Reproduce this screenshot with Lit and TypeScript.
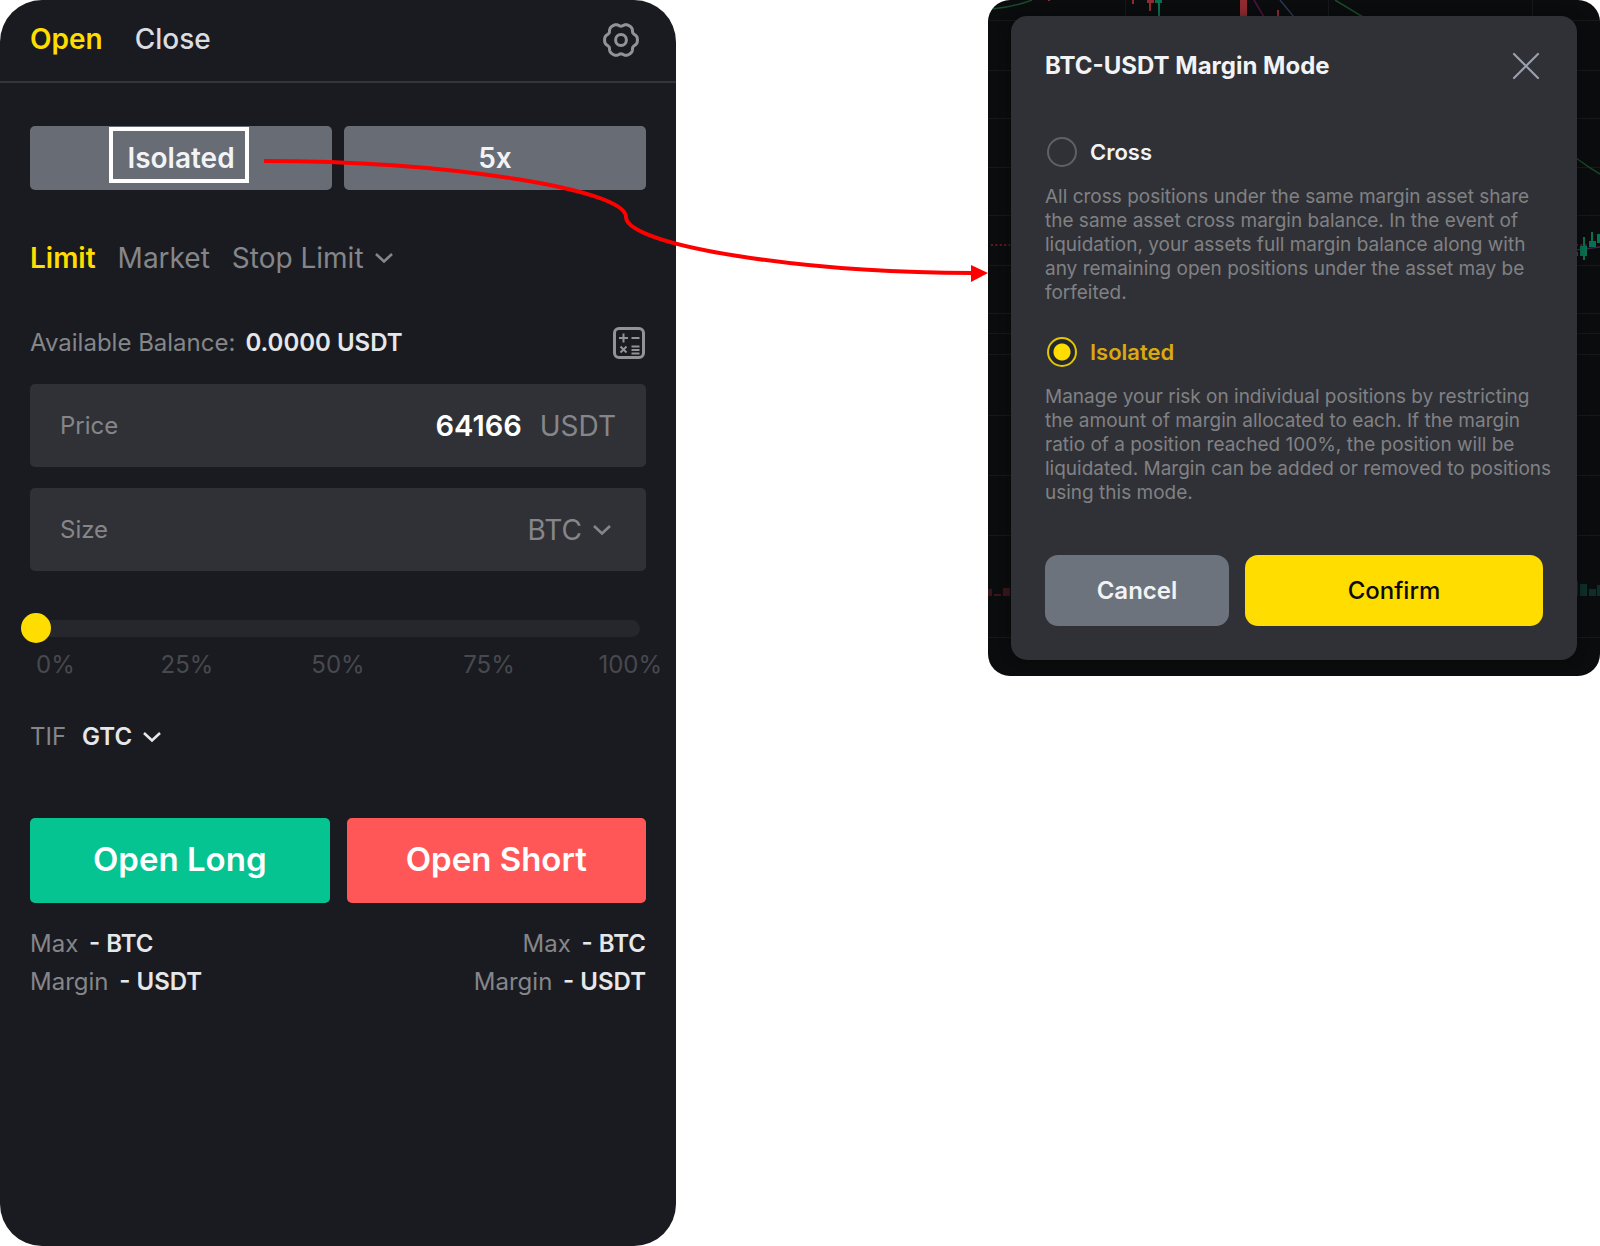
import { LitElement, html, css, svg } from "lit";
import { customElement, state } from "lit/decorators.js";

const caret = html`<svg class="caret" viewBox="0 0 20 12" aria-hidden="true">
  <path d="M2 2 L10 9.5 L18 2" fill="none" stroke="currentColor" stroke-width="2.6" />
</svg>`;

const shared = css`
  :host {
    display: block;
    font-family: Inter, "Liberation Sans", sans-serif;
  }
  * {
    box-sizing: border-box;
  }
  button,
  input,
  select {
    margin: 0;
    padding: 0;
    border: 0;
    background: none;
    color: inherit;
    font: inherit;
  }
  button,
  select {
    cursor: pointer;
  }
`;

@customElement("order-panel")
export class OrderPanel extends LitElement {
  static styles = [
    shared,
    css`
      .panel {
        min-height: 100vh;
        border-radius: 42px;
        background: #1a1b20;
        color: #85868a;
        font-size: 24px;
        line-height: 30px;
      }
      .head {
        display: flex;
        align-items: center;
        gap: 32px;
        height: 83px;
        padding: 0 36px 3px 30px;
        border-bottom: 2px solid #34353a;
        color: #dcdde0;
        font-size: 28px;
        font-weight: 500;
      }
      .head .icon-button {
        margin-left: auto;
      }
      .on {
        color: #ffdd00;
        font-weight: 600;
      }
      .icon-button {
        display: flex;
        color: #929396;
      }
      .gear {
        width: 38px;
        height: 40px;
      }
      .calc {
        width: 34px;
        height: 34px;
      }
      .body {
        padding: 43px 30px 30px;
      }
      .pair {
        display: grid;
        grid-template-columns: 1fr 1fr;
        gap: 12px;
      }
      .mode {
        height: 64px;
        border-radius: 5px;
        background: #676c75;
        color: #f2f3f5;
        font-size: 28px;
        font-weight: 600;
      }
      .marked {
        position: relative;
      }
      .marked::after {
        content: "";
        position: absolute;
        inset: -14px -14px -8px -18px;
        border: 4px solid #fff;
      }
      .types {
        display: flex;
        align-items: center;
        gap: 22px;
        margin-top: 53px;
        font-size: 28px;
      }
      .drop {
        display: flex;
        align-items: center;
        gap: 10px;
      }
      .drop select {
        appearance: none;
        field-sizing: content;
        outline: none;
      }
      .caret {
        width: 20px;
        height: 12px;
        flex: none;
      }
      .balance {
        display: flex;
        align-items: center;
        gap: 10px;
        height: 34px;
        margin-top: 53px;
      }
      .balance .icon-button {
        margin-left: auto;
      }
      .strong {
        color: #e6e7ea;
        font-weight: 600;
      }
      .field {
        display: flex;
        align-items: center;
        gap: 18px;
        height: 83px;
        margin-top: 21px;
        padding: 0 30px;
        border-radius: 5px;
        background: #303136;
      }
      .balance + .field {
        margin-top: 24px;
      }
      .field input {
        flex: 1;
        min-width: 0;
        outline: none;
        color: #fff;
        font-size: 29px;
        font-weight: 600;
        text-align: right;
      }
      .unit {
        font-size: 28px;
      }
      .field .drop {
        padding-right: 4px;
      }
      .slider {
        display: block;
        appearance: none;
        width: calc(100% + 3px);
        height: 30px;
        margin: 42px 0 0 -9px;
        outline: none;
      }
      .slider::-webkit-slider-runnable-track {
        height: 17px;
        border-radius: 9px;
        background: #26272c;
      }
      .slider::-webkit-slider-thumb {
        appearance: none;
        width: 30px;
        height: 30px;
        margin-top: -7px;
        border-radius: 50%;
        background: #ffdd00;
      }
      .ticks {
        display: grid;
        grid-template-columns: 1fr 2fr 2fr 2fr 1fr;
        justify-items: center;
        margin: 7px 6px 0;
        color: #47494e;
      }
      .ticks span:first-child {
        justify-self: start;
      }
      .ticks span:last-child {
        justify-self: end;
        margin-right: -22px;
      }
      .tif {
        display: flex;
        align-items: center;
        gap: 16px;
        margin-top: 42px;
      }
      .trade {
        gap: 17px;
        margin-top: 66px;
      }
      .trade button {
        height: 85px;
        padding-bottom: 3px;
        border-radius: 5px;
        color: #fff;
        font-size: 33px;
        font-weight: 600;
      }
      .long {
        background: #06c392;
      }
      .short {
        background: #ff5757;
      }
      .limits {
        display: flex;
        justify-content: space-between;
        margin-top: 22px;
        line-height: 38px;
      }
      .limits div:last-child {
        text-align: right;
      }
      .limits .strong {
        margin-left: 4px;
      }
    `,
  ];

  @state() private side = "Open";
  @state() private price = "64166";

  /* Six broad lobes separated by narrow notches. */
  private gearPath() {
    const points: string[] = [];
    for (let i = 0; i <= 120; i++) {
      const a = (i / 120) * Math.PI * 2;
      const notch = Math.pow((1 - Math.cos(6 * a)) / 2, 2);
      const r = 16.4 - 2.6 * notch;
      points.push(`${(19 + r * Math.cos(a)).toFixed(2)} ${(19 + r * Math.sin(a)).toFixed(2)}`);
    }
    return `M${points.join("L")}Z`;
  }

  private limits() {
    return html`<div>
      <div>Max <span class="strong">- BTC</span></div>
      <div>Margin <span class="strong">- USDT</span></div>
    </div>`;
  }

  render() {
    return html`
      <section class="panel">
        <header class="head">
          ${["Open", "Close"].map(
            (name) => html`<button
              class=${this.side === name ? "on" : ""}
              @click=${() => (this.side = name)}
            >${name}</button>`
          )}
          <button class="icon-button" aria-label="Settings">
            <svg class="gear" viewBox="0 -2 38 40" fill="none" stroke="currentColor" stroke-width="3" stroke-linejoin="round">
              <path d=${this.gearPath()} />
              <circle cx="19" cy="19" r="5.4" />
            </svg>
          </button>
        </header>
        <div class="body">
          <div class="pair">
            <button class="mode"><span class="marked">Isolated</span></button>
            <button class="mode">5x</button>
          </div>
          <div class="types">
            <button class="on">Limit</button>
            <button>Market</button>
            <div class="drop">
              <select aria-label="Stop order type"><option>Stop Limit</option></select>
              ${caret}
            </div>
          </div>
          <div class="balance">
            <span>Available Balance:</span>
            <span class="strong">0.0000 USDT</span>
            <button class="icon-button" aria-label="Calculator">
              <svg class="calc" viewBox="0 0 34 34" fill="none" stroke="currentColor" stroke-width="2">
                <rect x="2.5" y="2.5" width="29" height="29" rx="4.5" stroke-width="3" />
                <path d="M7 12h9M11.5 7.5v9M19.5 12h8M8.5 20.5l6 6M14.5 20.5l-6 6M19.5 20.5h8M19.5 24h8M19.5 27.5h8" />
              </svg>
            </button>
          </div>
          <div class="field">
            <label for="price">Price</label>
            <input
              id="price"
              inputmode="decimal"
              .value=${this.price}
              @input=${(e: Event) => (this.price = (e.target as HTMLInputElement).value)}
            />
            <span class="unit">USDT</span>
          </div>
          <div class="field">
            <label for="size">Size</label>
            <input id="size" inputmode="decimal" />
            <div class="drop unit">
              <select aria-label="Size unit"><option>BTC</option></select>
              ${caret}
            </div>
          </div>
          <input class="slider" type="range" min="0" max="100" value="0" aria-label="Order size percentage" />
          <div class="ticks">
            ${[0, 25, 50, 75, 100].map((n) => html`<span>${n}%</span>`)}
          </div>
          <div class="tif">
            <label for="tif">TIF</label>
            <div class="drop strong">
              <select id="tif"><option>GTC</option></select>
              ${caret}
            </div>
          </div>
          <div class="pair trade">
            <button class="long">Open Long</button>
            <button class="short">Open Short</button>
          </div>
          <div class="limits">${this.limits()}${this.limits()}</div>
        </div>
      </section>
    `;
  }
}

@customElement("margin-dialog")
export class MarginDialog extends LitElement {
  static styles = [
    shared,
    css`
      .backdrop {
        position: relative;
        overflow: hidden;
        padding: 16px 23px;
        border-radius: 22px;
        background: #0b0c0e;
      }
      .chart {
        position: absolute;
        inset: 0;
        width: 100%;
        height: 100%;
      }
      .card {
        position: relative;
        padding: 34px;
        border-radius: 16px;
        background: #303136;
        color: #f2f3f5;
        font-size: 22px;
        line-height: 32px;
        box-shadow: 0 0 12px rgba(0, 0, 0, 0.4);
      }
      .head {
        display: flex;
        align-items: center;
        justify-content: space-between;
      }
      h2 {
        margin: 0;
        font-size: 24px;
        font-weight: 700;
      }
      .close {
        display: flex;
        color: #9a9fae;
      }
      .close svg {
        width: 34px;
        height: 28px;
      }
      .option {
        display: flex;
        align-items: center;
        gap: 13px;
        margin-left: 2px;
        font-weight: 600;
      }
      .first {
        margin-top: 54px;
      }
      .option input {
        appearance: none;
        width: 30px;
        height: 30px;
        border: 2px solid #5d6269;
        border-radius: 50%;
      }
      .option input:checked {
        border-color: #e3c500;
        background: radial-gradient(circle, #ffdd00 8px, #25272f 9px);
      }
      .picked {
        color: #dba90f;
      }
      p {
        margin: 17px -10px 31px 0;
        color: #808184;
        font-size: 19px;
        line-height: 24px;
      }
      .actions {
        display: grid;
        grid-template-columns: 184fr 298fr;
        gap: 16px;
        margin-top: 50px;
      }
      .actions button {
        height: 71px;
        border-radius: 13px;
        font-size: 24px;
      }
      .cancel {
        background: #6d737d;
        font-weight: 600;
      }
      .confirm {
        background: #ffdd00;
        color: #0c0c0c;
        font-weight: 500;
      }
    `,
  ];

  @state() private mode = "Isolated";

  private options = [
    {
      name: "Cross",
      text: "All cross positions under the same margin asset share the same asset cross margin balance. In the event of liquidation, your assets full margin balance along with any remaining open positions under the asset may be forfeited.",
    },
    {
      name: "Isolated",
      text: "Manage your risk on individual positions by restricting the amount of margin allocated to each. If the margin ratio of a position reached 100%, the position will be liquidated. Margin can be added or removed to positions using this mode.",
    },
  ];

  private chart() {
    const rows = [20, 70, 118, 167, 215, 265, 313, 333, 354, 415, 475, 535, 637];
    const columns = [137, 340, 544];
    return html`<svg class="chart" viewBox="0 0 612 676" preserveAspectRatio="none" aria-hidden="true">
      ${rows.map((y) => svg`<rect x="0" y=${y} width="612" height="1" fill="#17181b" />`)}
      ${columns.map((x) => svg`<rect x=${x} y="0" width="1" height="30" fill="#17181b" />`)}
      <g fill="none" stroke-width="1.5">
        <path d="M4 9 Q26 7 44 0M347 0L375 17M588 158Q600 167 612 174" stroke="#174a2c" />
        <path d="M266 0L276 17" stroke="#4a1742" />
        <path d="M292 0L306 17" stroke="#2b3950" />
        <path d="M588 250L612 247" stroke="#4b1e55" />
        <path d="M3 245H22M588 245H610" stroke="#7a2027" stroke-dasharray="2 2.4" />
      </g>
      <g fill="#8f2b31">
        <rect x="60" y="0" width="2" height="1" /><rect x="144" y="0" width="2" height="4" />
        <rect x="159" y="0" width="7" height="3" /><rect x="161" y="0" width="2" height="11" />
        <rect x="252" y="0" width="7" height="16" /><rect x="289" y="10" width="2" height="6" />
        <rect x="588" y="252" width="2" height="4" />
      </g>
      <g fill="#0a6f50">
        <rect x="167" y="0" width="7" height="3" /><rect x="170" y="0" width="2" height="16" />
        <rect x="592" y="246" width="7" height="10" /><rect x="595" y="237" width="2" height="23" />
        <rect x="601" y="241" width="7" height="6" /><rect x="603" y="232" width="2" height="15" />
        <rect x="609" y="234" width="3" height="9" />
      </g>
      <path d="M0 589h4v7h-4zM6 594h7v2h-7zM15 588h7v8h-7zM588 581h2v15h-2z" fill="#3b151b" />
      <path d="M592 584h7v12h-7zM601 589h7v7h-7zM609 585h3v11h-3z" fill="#0d2f29" />
    </svg>`;
  }

  render() {
    return html`
      <div class="backdrop">
        ${this.chart()}
        <section class="card" role="dialog" aria-labelledby="title">
          <div class="head">
            <h2 id="title">BTC-USDT Margin Mode</h2>
            <button class="close" aria-label="Close">
              <svg viewBox="0 0 34 28" fill="none" stroke="currentColor" stroke-width="2.2" stroke-linecap="round">
                <path d="M5 2L29 26M29 2L5 26" />
              </svg>
            </button>
          </div>
          ${this.options.map(
            ({ name, text }, i) => html`
              <label class="option ${i === 0 ? "first" : ""} ${this.mode === name ? "picked" : ""}">
                <input
                  type="radio"
                  name="mode"
                  .checked=${this.mode === name}
                  @change=${() => (this.mode = name)}
                />
                ${name}
              </label>
              <p>${text}</p>
            `
          )}
          <div class="actions">
            <button class="cancel">Cancel</button>
            <button class="confirm">Confirm</button>
          </div>
        </section>
      </div>
    `;
  }
}

@customElement("app-root")
export class AppRoot extends LitElement {
  static styles = [
    shared,
    css`
      .page {
        position: relative;
        display: grid;
        grid-template-columns: minmax(0, 676fr) minmax(0, 312fr) minmax(0, 612fr);
        align-items: start;
        min-height: 100vh;
        background: #fff;
      }
      margin-dialog {
        grid-column: 3;
      }
      .arrow {
        position: absolute;
        top: 0;
        left: 0;
        width: 100%;
        pointer-events: none;
      }
    `,
  ];

  render() {
    return html`
      <main class="page">
        <order-panel></order-panel>
        <margin-dialog></margin-dialog>
        <svg class="arrow" viewBox="0 0 1600 300" aria-hidden="true">
          <path
            d="M264 161C445 161 626 189 626 217C626 245 800 273 973 273"
            fill="none"
            stroke="#f00"
            stroke-width="4"
          />
          <path d="M971 265L988 273L971 282Z" fill="#f00" />
        </svg>
      </main>
    `;
  }
}
